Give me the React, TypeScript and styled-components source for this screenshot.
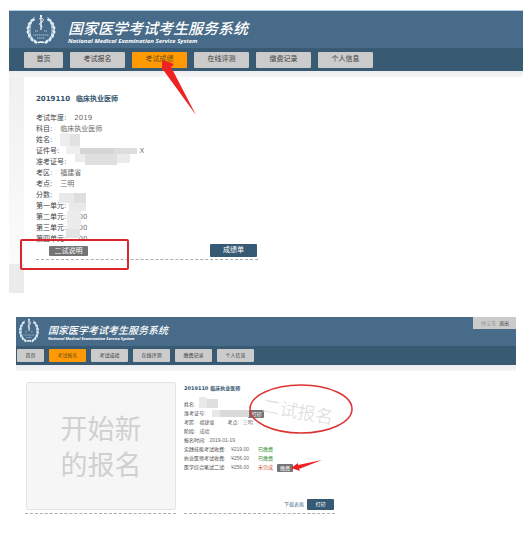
import React from "react";
import styled, { createGlobalStyle, css } from "styled-components";

const GlobalStyle = createGlobalStyle`
  *, *::before, *::after { box-sizing: border-box; }
  body { margin: 0; background: #fff; }
  button { font: inherit; padding: 0; border: 0; cursor: pointer; }
  dl, dt, dd, h1, h2, p { margin: 0; }
`;

const cjk = `"Noto Sans CJK SC", sans-serif`;

type Size = "large" | "small";
interface Sized {
  $size: Size;
}

const Page = styled.main`
  padding: 10px 3px 0 9px;
  font-family: "DejaVu Sans", ${cjk};
  color: #555;
`;

const Portal = styled.section<Sized>`
  position: relative;
  background: #fff;
  ${(p) =>
    p.$size === "large"
      ? css`
          font-size: 7px;
          line-height: 11px;
          margin-bottom: 24px;
        `
      : css`
          font-family: "Liberation Sans", ${cjk};
          font-size: 5px;
          line-height: 9px;
          margin: 0 7px;
        `}
`;

const Masthead = styled.header<Sized>`
  display: flex;
  align-items: flex-start;
  background: #476b88;
  ${(p) =>
    p.$size === "large"
      ? css`
          height: 38px;
          padding: 3px 0 0 16px;
          gap: 11px;
          border-top: 1px solid #a9cdea;
        `
      : css`
          height: 29px;
          padding: 1px 0 0 2px;
          gap: 8px;
        `}
`;

const Emblem = styled.svg<Sized>`
  flex: none;
  width: ${(p) => (p.$size === "large" ? 32 : 22)}px;
  height: ${(p) => (p.$size === "large" ? 32 : 26)}px;
`;

const Brand = styled.div<Sized>`
  color: #fff;
  font-style: italic;
  white-space: nowrap;
  padding-top: ${(p) => (p.$size === "large" ? 4 : 5)}px;
`;

const BrandName = styled.h1<Sized>`
  font-family: ${cjk};
  font-weight: 500;
  font-size: ${(p) => (p.$size === "large" ? 15 : 10)}px;
  line-height: ${(p) => (p.$size === "large" ? 19 : 13)}px;
`;

const BrandSub = styled.p<Sized>`
  font-family: "Open Sans", sans-serif;
  font-weight: 700;
  font-size: ${(p) => (p.$size === "large" ? 6 : 4)}px;
  line-height: ${(p) => (p.$size === "large" ? 8 : 6)}px;
`;

const Account = styled.div`
  display: flex;
  align-items: center;
  gap: 3px;
  height: 12px;
  margin: -1px 0 0 auto;
  padding: 0 7px 0 8px;
  background: #cbcbcb;
  color: #999;
`;

const SignOut = styled.a`
  color: #444;
  text-decoration: none;
`;

const Tabs = styled.nav<Sized>`
  display: flex;
  align-items: center;
  background: #395a73;
  ${(p) =>
    p.$size === "large"
      ? css`
          height: 23px;
          padding-left: 15px;
          gap: 7px;
        `
      : css`
          height: 19px;
          padding-left: 1px;
          gap: 5px;
        `}
`;

const Tab = styled.button<Sized & { $active: boolean }>`
  background: ${(p) => (p.$active ? "#ff9a05" : "#cbcbcb")};
  color: ${(p) => (p.$active ? "#6b4a12" : "#3c3c3c")};
  border-radius: 1px;
  white-space: nowrap;
  width: ${(p) => (p.$size === "large" ? 55 : 37)}px;
  height: ${(p) => (p.$size === "large" ? 16 : 13)}px;
  &:first-child {
    width: ${(p) => (p.$size === "large" ? 39 : 27)}px;
  }
`;

const Strip = styled.div`
  height: 6px;
  background: linear-gradient(#ececee, #f6f6f7);
`;

const Columns = styled.div`
  display: flex;
`;

const Gutter = styled.div`
  flex: none;
  display: flex;
  flex-direction: column;
  justify-content: flex-end;
  width: 15px;
  background: linear-gradient(#f0f0f0, #fdfdfd);
`;

const GutterFoot = styled.div`
  height: 29px;
  background: #ebebeb;
`;

const Score = styled.article`
  width: 222px;
  margin: 17px 0 33px 12px;
`;

const RecordTitle = styled.h2<Sized>`
  display: flex;
  font-family: "DejaVu Sans", ${cjk};
  font-size: inherit;
  font-weight: 700;
  line-height: 11px;
  color: #31536b;
  gap: ${(p) => (p.$size === "large" ? 6 : 2)}px;
  margin-bottom: ${(p) => (p.$size === "large" ? 8 : 6)}px;
`;

const Row = styled.div<Sized>`
  display: flex;
  align-items: center;
  white-space: nowrap;
  gap: ${(p) => (p.$size === "large" ? 8 : 4)}px;
  height: ${(p) => (p.$size === "large" ? 11 : 9)}px;
`;

const Term = styled.dt<{ $wide?: boolean }>`
  color: #3f4448;
  ${(p) => p.$wide && "width: 43px;"}
`;

const Detail = styled.dd<{ $width?: number; $tone?: "ok" | "due" }>`
  color: ${(p) => (p.$tone === "ok" ? "#2f8a2f" : p.$tone === "due" ? "#c8502f" : "#6a6a6a")};
  ${(p) => p.$width && `width: ${p.$width}px;`}
`;

const Hidden = styled.dd<{ $width: number }>`
  width: ${(p) => p.$width}px;
  text-align: right;
  color: #777;
`;

const Footer = styled.footer<Sized>`
  display: flex;
  align-items: center;
  border-bottom: 1px dashed #a9adb0;
  ${(p) =>
    p.$size === "large"
      ? css`
          justify-content: space-between;
          height: 15px;
          padding: 0 1px 3px 13px;
        `
      : css`
          justify-content: flex-end;
          height: 15px;
          padding: 0 1px 3px 0;
          gap: 3px;
          margin-top: 27px;
        `}
`;

const Primary = styled.button<Sized>`
  background: #365a74;
  color: #fff;
  border-radius: 1px;
  width: ${(p) => (p.$size === "large" ? 47 : 27)}px;
  height: ${(p) => (p.$size === "large" ? 13 : 11)}px;
`;

const Tag = styled.button<Sized>`
  background: #747474;
  color: #fff;
  border-radius: 1px;
  white-space: nowrap;
  line-height: 8px;
  width: ${(p) => (p.$size === "large" ? 39 : 16)}px;
  height: ${(p) => (p.$size === "large" ? 10 : 8)}px;
`;

const Download = styled.a`
  color: #4d7391;
  text-decoration: none;
`;

const Cards = styled.div`
  display: flex;
  align-items: flex-end;
  gap: 8px;
  padding: 11px 0 21px 9px;
`;

const NewEntry = styled.div`
  width: 151px;
  border-bottom: 1px dashed #a9adb0;
  padding: 0 0 3px 1px;
`;

const NewButton = styled.button`
  display: block;
  width: 100%;
  height: 128px;
  border: 1px solid #e4e4e4;
  border-radius: 2px;
  background: #f6f6f6;
  color: #d0d0d0;
  font-family: ${cjk};
  font-weight: 400;
  font-size: 27px;
  line-height: 36px;
`;

const Application = styled.article`
  width: 151px;
`;

const Marks = styled.svg`
  position: absolute;
  inset: 0;
  width: 100%;
  height: 100%;
  overflow: visible;
  pointer-events: none;
`;

const Watermark = styled.span`
  position: absolute;
  left: 246px;
  top: 83px;
  font-family: ${cjk};
  font-weight: 300;
  font-size: 18px;
  line-height: 20px;
  color: #d9d9d9;
  transform: rotate(10deg);
`;

const leaves = [0, 1, 2, 3, 4, 5, 6].map((i) => {
  const deg = 116 + i * 19;
  const a = (deg * Math.PI) / 180;
  return { x: 16 + 13 * Math.cos(a), y: 16 + 13 * Math.sin(a), turn: deg + 22 };
});

function Laurel() {
  return (
    <g>
      {leaves.map((l, i) => (
        <g key={i} transform={`translate(${l.x} ${l.y}) rotate(${l.turn})`}>
          <ellipse rx="1.400" ry="2.400" />
        </g>
      ))}
      <path d="M13 28.5C7 26.5 4.5 21 5 15C5.4 10 7 6 9.5 3" fill="none" stroke="#dcebf6" strokeWidth="0.8" />
    </g>
  );
}

function Logo({ size }: { size: Size }) {
  return (
    <Emblem $size={size} viewBox="0 0 32 32" preserveAspectRatio="none" aria-hidden="true" fill="#dcebf6">
      <Laurel />
      <g transform="translate(32 0) scale(-1 1)">
        <Laurel />
      </g>
      <path d="M13 28.6q3-1.2 6 0" fill="none" stroke="#fff" strokeWidth="1.6" />
      <path d="M16 1v15" stroke="#fff" strokeWidth="1.2" />
      <circle cx="16" cy="2" r="1.1" fill="#fff" />
      <path d="M14 5q3-2 4.500 0.500q0 2.500-2.500 3q-2.500 1-1 2.500q2.500 0.500 2 2.500" fill="none" stroke="#fff" strokeWidth="0.8" />
      <path d="M10 17h3M19 17h3M8 21h16M12 24h8" stroke="#a9c6dc" strokeWidth="1" strokeDasharray="1.500 0.500" />
    </Emblem>
  );
}

const tabNames = ["首页", "考试报名", "考试成绩", "在线评测", "缴费记录", "个人信息"];

function Top({ size, active, account }: { size: Size; active: string; account?: boolean }) {
  return (
    <>
      <Masthead $size={size}>
        <Logo size={size} />
        <Brand $size={size}>
          <BrandName $size={size}>国家医学考试考生服务系统</BrandName>
          <BrandSub $size={size}>National Medical Examination Service System</BrandSub>
        </Brand>
        {account && (
          <Account>
            <span>林宝玉</span>
            <SignOut href="#logout">退出</SignOut>
          </Account>
        )}
      </Masthead>
      <Tabs $size={size}>
        {tabNames.map((name) => (
          <Tab key={name} type="button" $size={size} $active={name === active}>
            {name}
          </Tab>
        ))}
      </Tabs>
      <Strip />
    </>
  );
}

const scoreRows = [
  { label: "考试年度:", value: "2019" },
  { label: "科目:", value: "临床执业医师" },
  { label: "姓名:" },
  { label: "证件号:", tail: "X", width: 77 },
  { label: "准考证号:" },
  { label: "考区:", value: "福建省" },
  { label: "考点:", value: "三明" },
  { label: "分数:" },
  { label: "第一单元:" },
  { label: "第二单元:", tail: "00", width: 13 },
  { label: "第三单元:", tail: "00", width: 13 },
  { label: "第四单元:", tail: "00", width: 13 },
];

const fees = [
  { label: "实践技能考试收费:", amount: "¥219.00", state: "已缴费", paid: true },
  { label: "执业医师考试收费:", amount: "¥256.00", state: "已缴费", paid: true },
  { label: "医学综合笔试二试:", amount: "¥256.00", state: "未完成", paid: false },
];

type Block = [x: number, y: number, w: number, h: number, fill: string];

const scoreBlocks: Block[] = [
  [51, 123, 10, 13, "#ededed"],
  [61, 124, 10, 12, "#e2e2e2"],
  [57, 136, 14, 8, "#efefef"],
  [71, 138, 34, 6, "#d5d5d5"],
  [105, 138, 23, 6, "#dddddd"],
  [66, 144, 10, 8, "#ececec"],
  [76, 144, 32, 11, "#dfdfdf"],
  [108, 144, 13, 9, "#ebebeb"],
  [50, 183, 15, 10, "#e9e9e9"],
  [65, 183, 12, 10, "#dedede"],
  [60, 193, 17, 8, "#e9e9e9"],
  [58, 201, 14, 18, "#ececec"],
  [57, 219, 14, 9, "#e4e4e4"],
];

const applicationBlocks: Block[] = [
  [183, 80, 8, 11, "#e9e9e9"],
  [191, 82, 11, 9, "#dfdfdf"],
  [196, 93, 8, 7, "#e8e8e8"],
  [204, 93, 29, 7, "#d9d9d9"],
];

function Blocks({ items }: { items: Block[] }) {
  return (
    <>
      {items.map(([x, y, w, h, fill]) => (
        <rect key={`${x}-${y}`} x={x} y={y} width={w} height={h} fill={fill} />
      ))}
    </>
  );
}

export default function App() {
  return (
    <Page>
      <GlobalStyle />
      <Portal $size="large">
        <Top size="large" active="考试成绩" />
        <Columns>
          <Gutter>
            <GutterFoot />
          </Gutter>
          <Score>
            <RecordTitle $size="large">
              <span>2019110</span>
              <span>临床执业医师</span>
            </RecordTitle>
            <dl>
              {scoreRows.map((r) => (
                <Row key={r.label} $size="large">
                  <Term>{r.label}</Term>
                  {r.value && <Detail>{r.value}</Detail>}
                  {r.tail && <Hidden $width={r.width}>{r.tail}</Hidden>}
                </Row>
              ))}
            </dl>
            <Footer $size="large">
              <Tag type="button" $size="large">二试说明</Tag>
              <Primary type="button" $size="large">成绩单</Primary>
            </Footer>
          </Score>
        </Columns>
        <Marks aria-hidden="true">
          <Blocks items={scoreBlocks} />
          <rect x="12" y="230" width="107" height="29" rx="1" fill="none" stroke="#d8262c" strokeWidth="2" />
          <path d="M153 50L165 54L162 57L187 105L155 61L153 60Z" fill="#ee2222" />
        </Marks>
      </Portal>

      <Portal $size="small">
        <Top size="small" active="考试报名" account />
        <Cards>
          <NewEntry>
            <NewButton type="button">
              开始新
              <br />
              的报名
            </NewButton>
          </NewEntry>
          <Application>
            <RecordTitle $size="small">
              <span>2019110</span>
              <span>临床执业医师</span>
            </RecordTitle>
            <dl>
              <Row $size="small">
                <Term>姓名:</Term>
              </Row>
              <Row $size="small">
                <Term>准考证号:</Term>
                <Hidden $width={35} />
                <Tag type="button" $size="small">打印</Tag>
              </Row>
              <Row $size="small">
                <Term>考区:</Term>
                <Detail $width={24}>福建省</Detail>
                <Term>考点:</Term>
                <Detail>三明</Detail>
              </Row>
              <Row $size="small">
                <Term>阶段:</Term>
                <Detail>成绩</Detail>
              </Row>
              <Row $size="small">
                <Term>报名时间:</Term>
                <Detail>2019-01-19</Detail>
              </Row>
              {fees.map((f) => (
                <Row key={f.label} $size="small">
                  <Term $wide>{f.label}</Term>
                  <Detail $width={23}>{f.amount}</Detail>
                  <Detail $tone={f.paid ? "ok" : "due"}>{f.state}</Detail>
                  {!f.paid && <Tag type="button" $size="small">缴费</Tag>}
                </Row>
              ))}
            </dl>
            <Footer $size="small">
              <Download href="#form">下载表格</Download>
              <Primary type="button" $size="small">打印</Primary>
            </Footer>
          </Application>
        </Cards>
        <Watermark>二试报名</Watermark>
        <Marks aria-hidden="true">
          <Blocks items={applicationBlocks} />
          <ellipse cx="285" cy="92" rx="51" ry="24" fill="none" stroke="#dd3333" strokeWidth="1.500" />
          <path d="M275 151L282 146L282 148L306 143L283 152L284 154Z" fill="#ee2222" />
        </Marks>
      </Portal>
    </Page>
  );
}
